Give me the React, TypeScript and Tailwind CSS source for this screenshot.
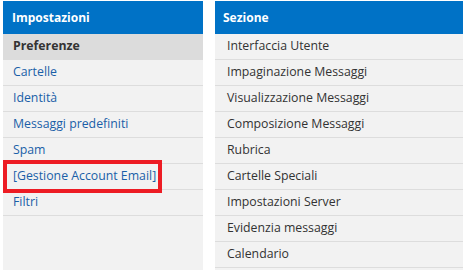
import React from "react";

const settings = [
  "Cartelle",
  "Identità",
  "Messaggi predefiniti",
  "Spam",
  "[Gestione Account Email]",
  "Filtri",
];

const sections = [
  "Interfaccia Utente",
  "Impaginazione Messaggi",
  "Visualizzazione Messaggi",
  "Composizione Messaggi",
  "Rubrica",
  "Cartelle Speciali",
  "Impostazioni Server",
  "Evidenzia messaggi",
  "Calendario",
];

const App: React.FC = () => {
  return (
    <div
      className="w-[463px] h-[270px] bg-white flex pt-[1px] pl-[3px] gap-[12px] overflow-hidden text-[12.3px]"
      style={{ fontFamily: '"Open Sans", "Noto Sans", sans-serif' }}
    >
      {/* Impostazioni */}
      <div className="w-[200px] h-[269px] bg-[#f2f2f2] flex flex-col">
        <div className="h-[33px] bg-[#0072c6] text-white text-[12px] font-bold flex items-center px-[9px]">
          Impostazioni
        </div>
        <div className="h-[26px] bg-[#dcdcdc] border-b border-[#dcdcdc] text-[#333] font-bold flex items-center px-[10px]">
          Preferenze
        </div>
        {settings.map((item) => (
          <div
            key={item}
            className="relative h-[26px] border-b border-[#dddddd] text-[#1a5fa8] flex items-center px-[10px]"
          >
            {item}
            {item.startsWith("[") && (
              <div className="absolute left-0 top-[-4px] w-[159px] h-[33px] border-[4px] border-[#ed1c24]" />
            )}
          </div>
        ))}
      </div>

      {/* Sezione */}
      <div className="flex-1 h-[269px] bg-[#f2f2f2] flex flex-col">
        <div className="h-[33px] bg-[#0072c6] text-white text-[12px] font-bold flex items-center px-[8px]">
          Sezione
        </div>
        {sections.map((item) => (
          <div
            key={item}
            className="h-[26px] border-b border-[#dddddd] text-[#333] flex items-center px-[12px]"
          >
            {item}
          </div>
        ))}
      </div>
    </div>
  );
};

export default App;
